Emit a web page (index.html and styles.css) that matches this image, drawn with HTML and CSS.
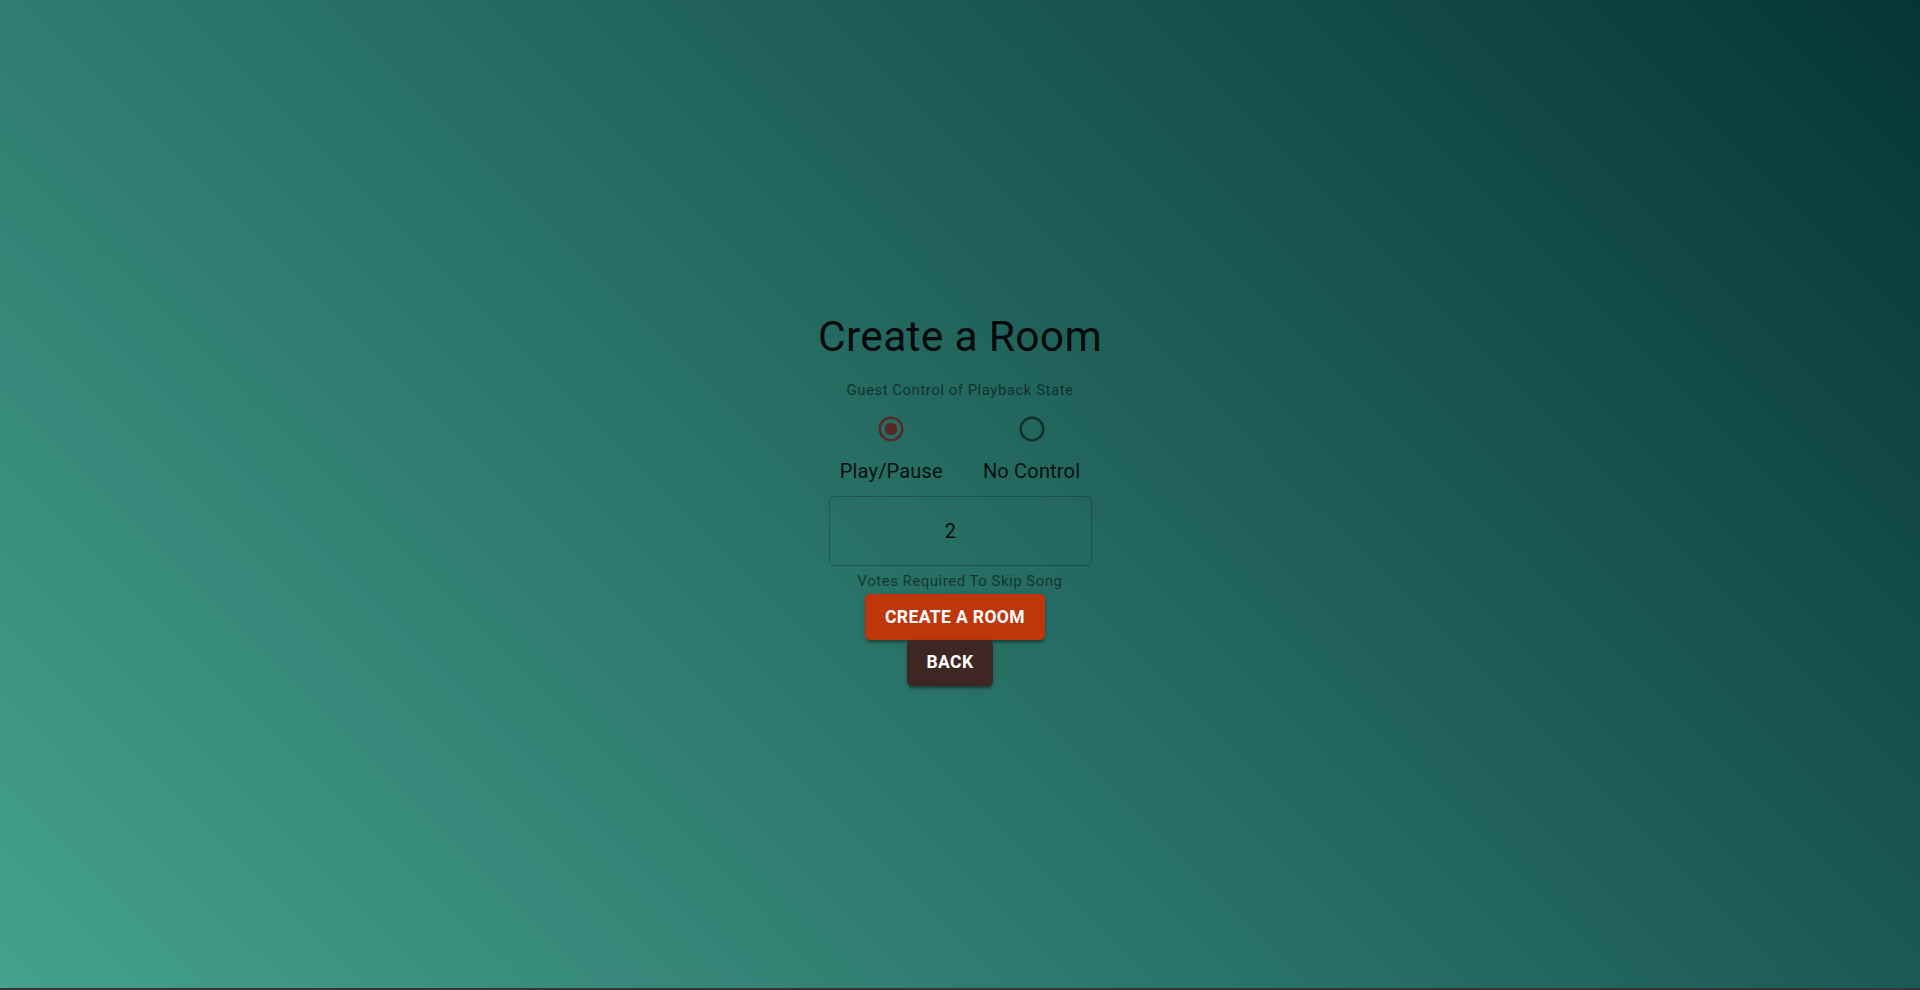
FILE: index.html
```html
<!DOCTYPE html>
<html lang="en">
<head>
<meta charset="utf-8">
<title>Create a Room</title>
<link rel="stylesheet" href="styles.css">
</head>
<body>
<main class="page">
  <h1 class="title">Create a Room</h1>
  <p class="helper">Guest Control of Playback State</p>
  <div class="radio-group">
    <label class="choice">
      <span class="radio checked">
        <svg viewBox="0 0 24 24" width="30" height="30" aria-hidden="true">
          <path d="M12 2C6.48 2 2 6.48 2 12s4.48 10 10 10 10-4.48 10-10S17.52 2 12 2zm0 18c-4.42 0-8-3.58-8-8s3.58-8 8-8 8 3.58 8 8-3.58 8-8 8z"/>
          <path d="M12 7c-2.76 0-5 2.24-5 5s2.24 5 5 5 5-2.24 5-5-2.24-5-5-5z"/>
        </svg>
      </span>
      <span class="choice-label">Play/Pause</span>
    </label>
    <label class="choice">
      <span class="radio">
        <svg viewBox="0 0 24 24" width="30" height="30" aria-hidden="true">
          <path d="M12 2C6.48 2 2 6.48 2 12s4.48 10 10 10 10-4.48 10-10S17.52 2 12 2zm0 18c-4.42 0-8-3.58-8-8s3.58-8 8-8 8 3.58 8 8-3.58 8-8 8z"/>
        </svg>
      </span>
      <span class="choice-label">No Control</span>
    </label>
  </div>
  <div class="field">
    <span class="field-value">2</span>
  </div>
  <p class="helper helper-field">Votes Required To Skip Song</p>
  <button class="btn btn-create" type="button">Create A Room</button>
  <button class="btn btn-back" type="button">Back</button>
</main>
<div class="bottom-strip"></div>
</body>
</html>
```

FILE: styles.css
```css
html, body {
  margin: 0;
  padding: 0;
}

body {
  background: #353535;
  font-family: Roboto, "Noto Sans", "Liberation Sans", sans-serif;
  overflow: hidden;
}

.page {
  height: 988px;
  box-sizing: border-box;
  padding-top: 9px;
  display: flex;
  flex-direction: column;
  align-items: center;
  justify-content: center;
  background: linear-gradient(45deg, #44a18d 0%, #063537 100%);
}

.bottom-strip {
  height: 2px;
  background: #353535;
}

.title {
  margin: 0;
  font-size: 42.5px;
  font-weight: 400;
  line-height: 1.235;
  letter-spacing: 0.00735em;
  color: rgba(0, 0, 0, 0.92);
}

.helper {
  margin: 14px 0 0;
  font-size: 15px;
  line-height: 1.66;
  letter-spacing: 0.03333em;
  color: rgba(0, 0, 0, 0.54);
}

.radio-group {
  display: flex;
  flex-direction: row;
}

.choice {
  display: flex;
  flex-direction: column;
  align-items: center;
  margin: 0 20px;
}

.radio {
  display: flex;
  padding: 11.25px;
}

.radio svg {
  fill: rgba(0, 0, 0, 0.54);
}

.radio.checked svg {
  fill: #5a2824;
}

.choice-label {
  padding-top: 1px;
  font-size: 20px;
  line-height: 1.5;
  letter-spacing: 0.00938em;
  color: rgba(0, 0, 0, 0.87);
}

.field {
  margin-top: 10px;
  width: 263px;
  height: 70px;
  box-sizing: border-box;
  border: 1px solid rgba(0, 0, 0, 0.23);
  border-radius: 5px;
  display: flex;
  align-items: center;
  justify-content: center;
  padding-right: 19px;
}

.field-value {
  font-size: 20px;
  letter-spacing: 0.00938em;
  color: rgba(0, 0, 0, 0.87);
}

.helper-field {
  margin-top: 3px;
}

.btn {
  border: 0;
  border-radius: 5px;
  padding: 7.5px 20px;
  font-family: Roboto, "Noto Sans", "Liberation Sans", sans-serif;
  font-size: 17.5px;
  font-weight: 700;
  line-height: 1.75;
  letter-spacing: 0.022em;
  text-transform: uppercase;
  color: #fff;
  box-shadow: 0 3.75px 1.25px -2.5px rgba(0, 0, 0, 0.2),
              0 2.5px 2.5px 0 rgba(0, 0, 0, 0.14),
              0 1.25px 6.25px 0 rgba(0, 0, 0, 0.12);
  cursor: pointer;
}

.btn-create {
  margin-right: 10px;
  background: #bf360c;
}

.btn-back {
  margin-right: 20px;
  background: #3e2723;
}
```
